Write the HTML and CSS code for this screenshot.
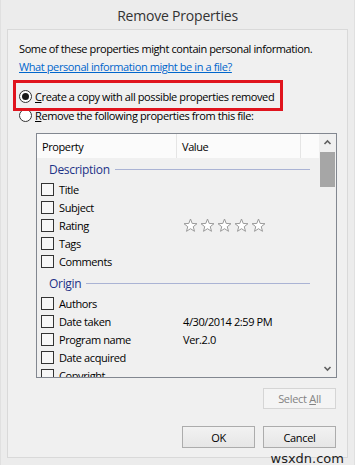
FILE: index.html
```html
<!DOCTYPE html>
<html>
<head>
<meta charset="utf-8">
<link rel="stylesheet" href="styles.css">
</head>
<body>
<div class="window">
  <div class="titlebar">Remove Properties</div>
  <div class="panel">
    <p class="intro">Some of these properties might contain personal information.</p>
    <a class="link" href="#">What personal information might be in a file?</a>
    <div class="options">
      <div class="radio-row first"><span class="radio checked"></span><span class="label"><u>C</u>reate a copy with all possible properties removed</span></div>
      <div class="radio-row second"><span class="radio"></span><span class="label"><u>R</u>emove the following properties from this file:</span></div>
      <div class="highlight"></div>
    </div>
    <div class="listbox">
      <div class="list-main">
        <div class="list-header">
          <div class="col col-prop">Property</div>
          <div class="col col-val">Value</div>
          <div class="col col-rest"></div>
        </div>
        <div class="list-body">
          <div class="group"><span class="group-name">Description</span><span class="group-line"></span></div>
          <div class="row"><span class="check"></span><span class="prop">Title</span><span class="val"></span></div>
          <div class="row"><span class="check"></span><span class="prop">Subject</span><span class="val"></span></div>
          <div class="row"><span class="check"></span><span class="prop">Rating</span><span class="val stars">
            <svg class="star" viewBox="0 0 15 15"><polygon points="7.5,1 9.2,5.45 13.97,5.7 10.26,8.7 11.5,13.3 7.5,10.7 3.5,13.3 4.74,8.7 1.03,5.7 5.8,5.45"/></svg>
            <svg class="star" viewBox="0 0 15 15"><polygon points="7.5,1 9.2,5.45 13.97,5.7 10.26,8.7 11.5,13.3 7.5,10.7 3.5,13.3 4.74,8.7 1.03,5.7 5.8,5.45"/></svg>
            <svg class="star" viewBox="0 0 15 15"><polygon points="7.5,1 9.2,5.45 13.97,5.7 10.26,8.7 11.5,13.3 7.5,10.7 3.5,13.3 4.74,8.7 1.03,5.7 5.8,5.45"/></svg>
            <svg class="star" viewBox="0 0 15 15"><polygon points="7.5,1 9.2,5.45 13.97,5.7 10.26,8.7 11.5,13.3 7.5,10.7 3.5,13.3 4.74,8.7 1.03,5.7 5.8,5.45"/></svg>
            <svg class="star" viewBox="0 0 15 15"><polygon points="7.5,1 9.2,5.45 13.97,5.7 10.26,8.7 11.5,13.3 7.5,10.7 3.5,13.3 4.74,8.7 1.03,5.7 5.8,5.45"/></svg>
          </span></div>
          <div class="row"><span class="check"></span><span class="prop">Tags</span><span class="val"></span></div>
          <div class="row"><span class="check"></span><span class="prop">Comments</span><span class="val"></span></div>
          <div class="group second-group"><span class="group-name">Origin</span><span class="group-line"></span></div>
          <div class="row"><span class="check"></span><span class="prop">Authors</span><span class="val"></span></div>
          <div class="row"><span class="check"></span><span class="prop">Date taken</span><span class="val">4/30/2014 2:59 PM</span></div>
          <div class="row"><span class="check"></span><span class="prop">Program name</span><span class="val">Ver.2.0</span></div>
          <div class="row"><span class="check"></span><span class="prop">Date acquired</span><span class="val"></span></div>
          <div class="row"><span class="check"></span><span class="prop">Copyright</span><span class="val"></span></div>
        </div>
      </div>
      <div class="scrollbar">
        <div class="arrow"><svg viewBox="0 0 17 17" width="17" height="17"><path d="M5.5 10 L8.5 7 L11.5 10" /></svg></div>
        <div class="thumb"></div>
        <div class="track"></div>
        <div class="arrow"><svg viewBox="0 0 17 17" width="17" height="17"><path d="M5.5 7 L8.5 10 L11.5 7" /></svg></div>
      </div>
    </div>
    <div class="select-row"><button class="btn disabled">Select <u>A</u>ll</button></div>
    <div class="action-row"><button class="btn">OK</button><button class="btn">Cancel</button></div>
    <div class="watermark">wsxdn.com</div>
  </div>
</div>
</body>
</html>
```

FILE: styles.css
```css
* { box-sizing: border-box; }
html, body { margin: 0; padding: 0; }
body {
  background: #ececec;
  font-family: "Open Sans", "Noto Sans", sans-serif;
  font-size: 11px;
  letter-spacing: -0.4px;
  color: #000;
}
.window {
  width: 355px;
  height: 465px;
  display: flex;
  flex-direction: column;
  border-left: 1px solid #e0e0e0;
  border-right: 1px solid #e0e0e0;
}
.titlebar {
  height: 29px;
  display: flex;
  align-items: center;
  justify-content: center;
  font-size: 14px;
  letter-spacing: -0.2px;
  color: #333;
  padding-top: 2px;
}
.panel {
  position: relative;
  margin: 0 6px 7px 6px;
  flex: 1;
  background: #f0f0f0;
  border: 1px solid #d9d9d9;
  padding: 10px 11px 0 11px;
  display: flex;
  flex-direction: column;
}
.intro { margin: 0; line-height: 18px; height: 18px; white-space: nowrap; }
.link {
  display: block;
  line-height: 18px;
  height: 18px;
  color: #0066cc;
  text-decoration: underline;
  white-space: nowrap;
}
.options { position: relative; margin-top: 11px; }
.radio-row {
  display: flex;
  align-items: center;
  height: 18px;
  white-space: nowrap;
}
.radio-row.second { margin-top: 1px; }
.radio {
  width: 13px;
  height: 13px;
  border-radius: 50%;
  border: 1px solid #333;
  background: #fff;
  margin-right: 3px;
  display: flex;
  align-items: center;
  justify-content: center;
}
.radio.checked::after {
  content: "";
  width: 7px;
  height: 7px;
  border-radius: 50%;
  background: #1a1a1a;
}
.label u { text-decoration: underline; }
.highlight {
  position: absolute;
  left: -6px;
  top: -7px;
  width: 270px;
  height: 31px;
  border: 3px solid #e0141e;
  pointer-events: none;
}
.listbox {
  margin-top: 9px;
  margin-left: 17px;
  width: 301px;
  height: 245px;
  border: 1px solid #828790;
  display: flex;
  background: #f0f0f0;
}
.list-main { flex: 1; display: flex; flex-direction: column; overflow: hidden; }
.list-header { display: flex; height: 24px; background: #fbfbfb; }
.col { display: flex; align-items: center; height: 24px; }
.col-prop { width: 140px; padding-left: 5px; border-right: 1px solid #e5e5e5; }
.col-val { width: 124px; padding-left: 5px; border-right: 1px solid #e5e5e5; }
.col-rest { flex: 1; }
.list-body { flex: 1; overflow: hidden; }
.group {
  display: flex;
  align-items: center;
  height: 22px;
  padding-left: 12px;
  padding-right: 9px;
}
.second-group { margin-top: 2px; }
.group-name { color: #1e3287; font-size: 12px; letter-spacing: -0.3px; }
.group-line { flex: 1; height: 1px; background: #aab3d4; margin-left: 5px; }
.row { display: flex; align-items: center; height: 18px; white-space: nowrap; }
.check {
  width: 13px;
  height: 13px;
  border: 1px solid #333;
  background: #f7f7f7;
  margin-left: 4px;
  margin-right: 5px;
  flex: none;
}
.prop { width: 118px; }
.val { padding-left: 6px; display: flex; align-items: center; }
.stars { gap: 2px; }
.star { width: 15px; height: 15px; }
.star polygon { fill: #fff; stroke: #9a9a9a; stroke-width: 1; stroke-linejoin: round; }
.scrollbar {
  width: 17px;
  display: flex;
  flex-direction: column;
  background: #f0f0f0;
}
.arrow { height: 17px; }
.arrow svg { display: block; }
.arrow path { fill: none; stroke: #606060; stroke-width: 1.6; }
.thumb { height: 35px; margin: 1px 1px 0 1px; background: #a6a6a6; }
.track { flex: 1; }
.select-row { display: flex; justify-content: flex-end; margin-top: 10px; }
.action-row { display: flex; justify-content: flex-end; gap: 8px; margin-top: 17px; }
.btn {
  width: 73px;
  height: 22px;
  font-family: inherit;
  font-size: 11px;
  letter-spacing: -0.3px;
  color: #000;
  background: linear-gradient(#f2f2f2, #e6e6e6);
  border: 1px solid #acacac;
  border-radius: 0;
  padding: 0;
}
.select-row .btn { height: 21px; }
.btn.disabled { color: #838383; background: #f4f4f4; border-color: #d5d5d5; }
.watermark {
  position: absolute;
  right: 3px;
  bottom: -9px;
  font-size: 13px;
  line-height: 15px;
  letter-spacing: 0;
  color: #222;
  font-family: "DejaVu Sans", sans-serif;
}
```
